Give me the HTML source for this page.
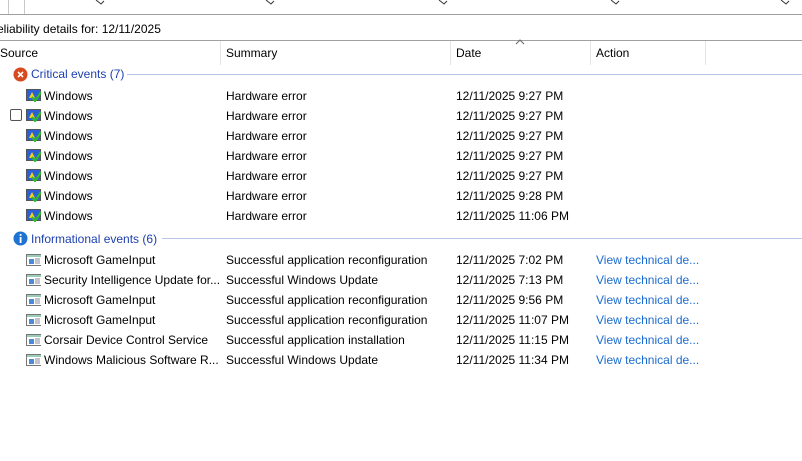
<!DOCTYPE html>
<html><head><style>
body{margin:0;width:802px;height:461px;background:#fff;font-family:"Liberation Sans",sans-serif;font-size:12px;color:#000;position:relative;overflow:hidden}
.a{position:absolute;white-space:nowrap}
.row{position:absolute;left:0;height:20px;line-height:20px;width:802px}
.row span{position:absolute}
.link{color:#1a6bd1}
.ic{position:absolute;left:26px;top:3px;width:15px;height:13px}
</style></head><body>
<div class="a" style="left:0;top:14px;width:802px;border-top:1px solid #a0a0a0"></div>
<div class="a" style="left:8px;top:0;height:14px;border-left:1px solid #c8c8c8"></div>
<div class="a" style="left:24px;top:0;height:14px;border-left:1px solid #c8c8c8"></div>
<svg class="a" style="left:0;top:0" width="802" height="8">
<g fill="none" stroke="#333" stroke-width="1">
<path d="M96 0 L101 4 L104 1"/><path d="M266 0 L271 4 L274 1"/><path d="M439 0 L444 4 L447 1"/><path d="M611 0 L616 4 L619 1"/><path d="M781 0 L786 4 L789 1"/>
</g></svg>
<div class="a" style="left:-3px;top:22px">eliability details for: 12/11/2025</div>
<div class="a" style="left:0;top:40px;width:802px;border-top:1px solid #a0a0a0"></div>
<div class="a" style="left:0;top:46px">Source</div>
<div class="a" style="left:226px;top:46px">Summary</div>
<div class="a" style="left:456px;top:46px">Date</div>
<div class="a" style="left:596px;top:46px">Action</div>
<div class="a" style="left:220px;top:41px;height:24px;border-left:1px solid #e5e5e5"></div>
<div class="a" style="left:450px;top:41px;height:24px;border-left:1px solid #e5e5e5"></div>
<div class="a" style="left:590px;top:41px;height:24px;border-left:1px solid #e5e5e5"></div>
<div class="a" style="left:705px;top:41px;height:24px;border-left:1px solid #e5e5e5"></div>
<svg class="a" style="left:515px;top:39px" width="10" height="6"><path d="M1 5 L5 1 L9 5" fill="none" stroke="#666"/></svg>

<svg class="a" style="left:13px;top:67px" width="15" height="15"><circle cx="7.5" cy="7.5" r="7" fill="#d9491e"/><path d="M5 5 L10 10 M10 5 L5 10" stroke="#fff" stroke-width="1.6"/></svg>
<div class="a link" style="left:31px;top:67px;color:#1c3fb0">Critical events (7)</div>
<div class="a" style="left:127px;top:74px;width:675px;border-top:1px solid #b9c6e6"></div>

<svg width="0" height="0" style="position:absolute"><defs>
<g id="w"><rect x="0.5" y="0.5" width="14" height="11" fill="#2b5fd8" stroke="#555"/><path d="M3 9 L6 3 L9 9Z" fill="#f3d21a"/><path d="M6 8 L9 12 L15 3" stroke="#2dbb2d" stroke-width="2.2" fill="none"/></g>
<g id="i"><rect x="0.5" y="1.5" width="15" height="11" fill="#fff" stroke="#777"/><rect x="1" y="2" width="14" height="2" fill="#9cb"/><rect x="3" y="6" width="5" height="5" fill="#4a8ad6"/><path d="M9 6h5M9 8h5M9 10h5" stroke="#889"/></g>
</defs></svg>

<div class="row" style="top:86px"><svg class="ic" width="16" height="14"><use href="#w"/></svg><span style="left:44px">Windows</span><span style="left:226px">Hardware error</span><span style="left:456px">12/11/2025 9:27 PM</span></div>
<div class="row" style="top:106px"><div class="a" style="left:10px;top:3px;width:12px;height:12px;border:1px solid #555;border-radius:2px;box-sizing:border-box"></div><svg class="ic" width="16" height="14"><use href="#w"/></svg><span style="left:44px">Windows</span><span style="left:226px">Hardware error</span><span style="left:456px">12/11/2025 9:27 PM</span></div>
<div class="row" style="top:126px"><svg class="ic" width="16" height="14"><use href="#w"/></svg><span style="left:44px">Windows</span><span style="left:226px">Hardware error</span><span style="left:456px">12/11/2025 9:27 PM</span></div>
<div class="row" style="top:146px"><svg class="ic" width="16" height="14"><use href="#w"/></svg><span style="left:44px">Windows</span><span style="left:226px">Hardware error</span><span style="left:456px">12/11/2025 9:27 PM</span></div>
<div class="row" style="top:166px"><svg class="ic" width="16" height="14"><use href="#w"/></svg><span style="left:44px">Windows</span><span style="left:226px">Hardware error</span><span style="left:456px">12/11/2025 9:27 PM</span></div>
<div class="row" style="top:186px"><svg class="ic" width="16" height="14"><use href="#w"/></svg><span style="left:44px">Windows</span><span style="left:226px">Hardware error</span><span style="left:456px">12/11/2025 9:28 PM</span></div>
<div class="row" style="top:206px"><svg class="ic" width="16" height="14"><use href="#w"/></svg><span style="left:44px">Windows</span><span style="left:226px">Hardware error</span><span style="left:456px">12/11/2025 11:06 PM</span></div>

<svg class="a" style="left:13px;top:231px" width="15" height="15"><circle cx="7.5" cy="7.5" r="7" fill="#1e73d2"/><rect x="6.7" y="6" width="1.8" height="6" fill="#fff"/><rect x="6.7" y="3" width="1.8" height="1.8" fill="#fff"/></svg>
<div class="a" style="left:31px;top:232px;color:#1c3fb0">Informational events (6)</div>
<div class="a" style="left:162px;top:238px;width:640px;border-top:1px solid #b9c6e6"></div>

<div class="row" style="top:250px"><svg class="ic" width="16" height="14"><use href="#i"/></svg><span style="left:44px">Microsoft GameInput</span><span style="left:226px">Successful application reconfiguration</span><span style="left:456px">12/11/2025 7:02 PM</span><span class="link" style="left:596px">View technical de...</span></div>
<div class="row" style="top:270px"><svg class="ic" width="16" height="14"><use href="#i"/></svg><span style="left:44px">Security Intelligence Update for...</span><span style="left:226px">Successful Windows Update</span><span style="left:456px">12/11/2025 7:13 PM</span><span class="link" style="left:596px">View technical de...</span></div>
<div class="row" style="top:290px"><svg class="ic" width="16" height="14"><use href="#i"/></svg><span style="left:44px">Microsoft GameInput</span><span style="left:226px">Successful application reconfiguration</span><span style="left:456px">12/11/2025 9:56 PM</span><span class="link" style="left:596px">View technical de...</span></div>
<div class="row" style="top:310px"><svg class="ic" width="16" height="14"><use href="#i"/></svg><span style="left:44px">Microsoft GameInput</span><span style="left:226px">Successful application reconfiguration</span><span style="left:456px">12/11/2025 11:07 PM</span><span class="link" style="left:596px">View technical de...</span></div>
<div class="row" style="top:330px"><svg class="ic" width="16" height="14"><use href="#i"/></svg><span style="left:44px">Corsair Device Control Service</span><span style="left:226px">Successful application installation</span><span style="left:456px">12/11/2025 11:15 PM</span><span class="link" style="left:596px">View technical de...</span></div>
<div class="row" style="top:350px"><svg class="ic" width="16" height="14"><use href="#i"/></svg><span style="left:44px">Windows Malicious Software R...</span><span style="left:226px">Successful Windows Update</span><span style="left:456px">12/11/2025 11:34 PM</span><span class="link" style="left:596px">View technical de...</span></div>
</body></html>
